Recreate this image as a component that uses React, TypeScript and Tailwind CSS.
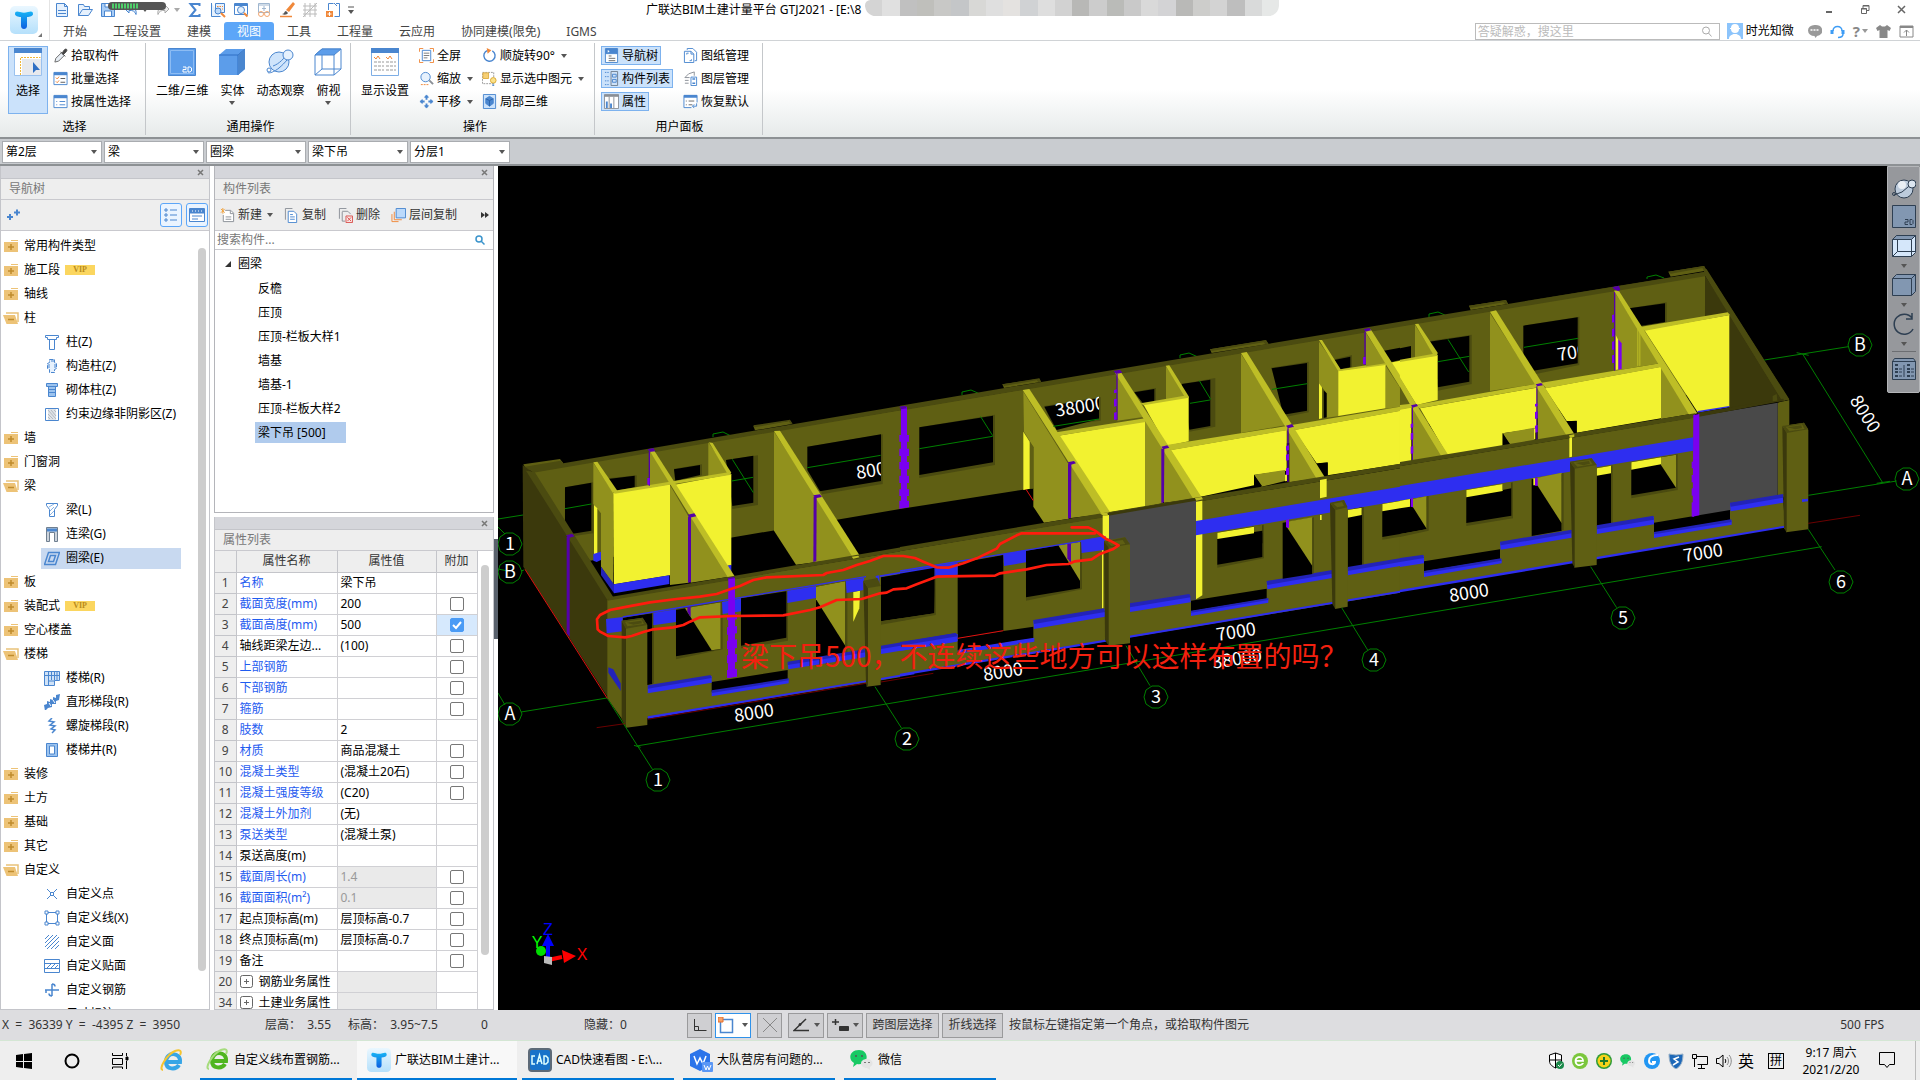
import React from "react";

const FONT = "font-['Noto_Sans','Noto_Sans_CJK_SC',sans-serif]";

type IconProps = { name: string; className?: string; size?: number };

const B = "#4a86cf";
const G = "#8a8f96";

const shapes: Record<string, React.ReactNode> = {
  file: <g stroke={B} fill="none"><path d="M2.5 1.5h8l3 3v10h-11z" fill="#e6f1fd" /><path d="M10.500 1.500v3h3M4 8.500h8M4 11.500h8" /></g>,
  open: <path d="M1.500 13.500v-11h5l1 2h5v3M1.500 13.500l4-6h10l-4 6z" fill="#e6f1fd" stroke={B} />,
  save: <g stroke={B}><path d="M1.500 1.500h13v13h-13z" fill="#a9cdf6" /><path d="M4.500 14v-5h7v5M5 2v3h6v-3" fill="#fff" /></g>,
  undo: <path d="M6 3l-4 4 4 4v-2.500c4-.5 6 1 7 4 1-5-2-7.500-7-7z" fill="#e6f1fd" stroke={B} />,
  redo: <path d="M10 3l4 4-4 4v-2.500c-4-.5-6 1-7 4-1-5 2-7.500 7-7z" fill="#eee" stroke="#aaa" />,
  sum: <path d="M12.500 4v-2h-9l5 6-5 6h9v-2" fill="none" stroke={B} strokeWidth="2" />,
  calc: <g fill="none" stroke={B}><path d="M1.500 1v13.500h9M5.500 1.500h9v9h-9z" fill="#e6f1fd" /><path d="M7 4.500h6M7 7h6" stroke="#f0883a" strokeDasharray="1.500 1" /><circle cx="8" cy="9" r="3" fill="#bcdafb" /><path d="M11 11l4 4" stroke="#f0883a" strokeWidth="2" /></g>,
  find: <g fill="none" stroke={B}><path d="M1.500 1.500h13v11h-13z" /><path d="M2 3h12" strokeWidth="2" /><circle cx="8" cy="8" r="3.500" fill="#e6f1fd" /><path d="M11 11l3.500 3.500" stroke="#f0883a" strokeWidth="2" /></g>,
  glasses: <g fill="none" stroke="#9fb6cf"><path d="M2.500 1.500h11v9h-11zM3 3h10" /><path d="M8 4v5M6 6.500h4" /><g stroke="#f3a771"><circle cx="5" cy="12" r="2.500" /><circle cx="11" cy="12" r="2.500" /></g></g>,
  brush: <g><path d="M14 0l2 2-6 8-3-2z" fill="#f0883a" /><path d="M3 12c3 0 2-3 4-3l2 2c-1 2-4 2-6 1z" fill="#555" /><path d="M1 14.500h12" stroke="#f0883a" strokeWidth="1.500" /></g>,
  mesh: <path d="M3 1v14M8 1v14M13 1v14M1 4h14M1 8h14M1 12h14M1 15l14-14" stroke="#bbb" fill="none" />,
  addfile: <g stroke={B} fill="none"><path d="M3.500 8v-6.500h5M11 1.500h3.500v13h-5" /><path d="M9 1l3 3" /><path d="M1 9h7v6h-7z" fill="#f0883a" stroke="none" /><path d="M4.500 10v4M2.500 12h4" stroke="#fff" /></g>,
  picker: <g><path d="M2 15l1-4 6-6 3 3-6 6z" fill="#e8eef5" stroke="#666" /><path d="M8 4l5 5M10 5l2-3c2-2 4 0 2 2l-3 3z" fill="#444" stroke="#444" /></g>,
  batch: <g stroke={B} fill="none"><path d="M1 1.500h14v13h-14z" fill="#fff" /><path d="M1 3h14" strokeWidth="3" /><path d="M3 7l1.500 1.500 2-2.500M3 11l1.500 1.500 2-2.500" stroke="#f0883a" /><path d="M8 8h5M8 12h5" stroke="#555" /></g>,
  byattr: <g stroke={B} fill="none"><path d="M1 1.500h14v13h-14z" fill="#fff" /><path d="M1 3h14" strokeWidth="3" /><path d="M3.500 8h1M3.500 11.500h1M7 8h6M7 11.500h6" stroke={B} /></g>,
  full: <g fill="none"><path d="M.500 4v-3.500h4M11.500.500h4v3.500M15.500 12v3.500h-4M4.500 15.500h-4v-3.500" stroke="#f0883a" /><path d="M3.500 2.500h9v11h-9z" stroke={B} /><path d="M5 5.500h6M5 8h6M5 10.500h4" stroke="#777" /></g>,
  zoom: <g fill="none" stroke={B}><circle cx="7" cy="6.500" r="5" fill="#e6f1fd" /><path d="M11 10l4 4" stroke={G} strokeWidth="2" /><path d="M2 14.500h9" stroke="#f0883a" strokeDasharray="2 1" /></g>,
  pan: <g stroke={B} fill={B}><path d="M8 1l2 2.500h-4zM8 15l2-2.500h-4zM1 8l2.500-2v4zM15 8l-2.500-2v4z" /><path d="M8 3v3M8 10v3M3 8h3M10 8h3" strokeWidth="2" /></g>,
  rotate: <g fill="none"><path d="M6 2.500a6 6 0 1 0 5 .5" stroke={B} strokeWidth="1.500" /><path d="M5 0l5 2.500-4 3.500z" fill="#f0883a" /></g>,
  showsel: <g fill="none"><path d="M.500 1.500h12v12h-12z" stroke="#999" strokeDasharray="2 1" /><path d="M1 2h6v6h-6z" fill="#f6cf74" stroke="#dfae43" /><circle cx="12" cy="10" r="3" fill="#fbe28a" stroke="#d9a832" /><path d="M11 14h2M11 15.500h2" stroke={B} /></g>,
  local3d: <g stroke={B}><path d="M1.500.500h13v15h-13z" fill="#cbe2fb" /><path d="M8 2.500l4 2.500v5l-4 3-4-3v-5z" fill={B} /><path d="M4 5l4 2 4-2M8 7v6" stroke="#2a62a8" fill="none" /></g>,
  navtree: <g stroke={B} fill="none"><path d="M1.500.500h13v15h-13z" fill="#fff" /><path d="M2 1h12v5h-12z" fill={B} /><path d="M4 2l2 1.500-2 1.500z" fill="#fff" stroke="none" /><path d="M5 8.500h3M5 11h7M5 13.500h7" stroke="#666" /></g>,
  complist: <g stroke={B} fill="none"><path d="M1 1.500h4M1 6h4M1 10.500h4M1 14.500h4" strokeDasharray="1.500 1" /><path d="M7.500.500h7v15h-7z" fill="#cfe2f7" stroke="#6f7f90" /><path d="M9 3.500h4v3h-4zM9 9h4v3h-4z" /></g>,
  attr: <g fill="none" stroke={G}><path d="M.500.500h15v15h-15z" fill="#fff" /><path d="M0 2h16" strokeWidth="2" /><path d="M5.500 3v12M10.500 3v12" /><path d="M3 8v7M7.500 10v5" stroke={B} strokeWidth="2" /></g>,
  drawing: <g stroke={B} fill="none"><path d="M4.500 2v-1.500h6l4 4v9h-2" /><path d="M1.500 3.500h7l3 3v9h-10z" fill="#fff" /><path d="M8.500 3.500v3h3M4 7v-1.500h2M9 12v1.500h-2" /></g>,
  layers: <g fill="none"><path d="M12 1l-6 2-4 4h5M2 10h4M2 13h4M12 1v4" stroke={G} /><path d="M8.500 6.500h6v9h-6z" fill="#fff" stroke={B} /><path d="M10 8.500h3M10 13h3" stroke={B} strokeWidth="1.500" /></g>,
  restore: <g stroke={B} fill="none"><path d="M15 9v-7.500h-14v13h8" fill="#fff" /><path d="M1 2.500h14" strokeWidth="3" /><path d="M3 7.500h1M3 11.500h1M6 7.500h6M6 11.500h4" stroke="#666" /><path d="M14.500 10v3h-4M12 11l-2 2 2 2" /></g>,
  newc: <g fill="none" stroke={G}><path d="M5.500 2.500h6l3 3v9h-11v-7" fill="#fff" /><path d="M11 3v3h3M6 9.500h6M6 12h6" /><path d="M1 1l4 4M5 1l-4 4M3 0v6" stroke="#f0a03a" /></g>,
  copy: <g fill="none" stroke={B}><path d="M9 .500h-7.500v12" stroke={G} /><path d="M4.500 3.500h6l3 3v9h-9z" fill="#fff" /><path d="M6.500 7h3M6.500 9.500h5M6.500 12h5" /></g>,
  del: <g fill="none" stroke={G}><path d="M9 .500h-7.500v11M4.500 3.500h6l3 3M4.500 4v10h3" /><path d="M8.500 8.500h7v7h-7z" stroke="#d9534f" fill="#fbe3e2" /><path d="M10 10l4 4M14 10l-4 4" stroke="#d9534f" /></g>,
  between: <g fill="none"><path d="M5.500.500h10v10h-10z" fill="#bcdafb" stroke={B} /><path d="M3.500 4v8.500h8M1 6.500v8h7" stroke="#f0883a" /></g>,
  column: <path d="M1.500 1.500h13v2h-2v2h-9v-2h-2zM5.500 5.500v10h5v-10" fill="#fff" stroke={B} />,
  gzz: <g fill="none" stroke={B}><path d="M5.500 1.500h5v3l2 1v5l-2 1v3h-5v-3l-2-1v-5l2-1z" fill="#e6f1fd" strokeDasharray="4 1" /><path d="M5 6v4M11 6v4M7 3h3" /></g>,
  brick: <g fill="none" stroke={B}><path d="M2.500 1.500h11v3h-11zM4.500 4.500h7v10h-7z" fill="#9cc3ee" /><path d="M5 7.500h6M5 10.500h6" /></g>,
  hatchbox: <g fill="none"><path d="M1.500 2.500h13v12h-13z" fill="#fff" stroke={B} /><path d="M4 3h8v11h-8z" fill="#dfe3e8" /><path d="M4 4l8 9M7 4l5 6M4 8l5 5M10 4l2 2M4 11l2 2" stroke="#b4bac1" /></g>,
  beam: <g fill="none" stroke={B}><path d="M2.500 1.500h11v2l-3 4v7h-5v-7l-3-4z" fill="#fff" /><path d="M5 5l5-3M6 9l4-4M6 13l4-4" stroke="#8ab4e4" /></g>,
  lianliang: <g fill="none"><path d="M2.500 15.500v-14h11v14h-3v-9h-5v9z" fill="#ccd3db" stroke="#6f7f90" /><path d="M3 2.500h10v3h-10z" fill={B} /></g>,
  ring: <path d="M4.500 2.500h11l-4 12h-11zM6.500 5.500h5l-2 6h-5z" fill="none" stroke={B} strokeWidth="1.500" />,
  stair: <g fill="none" stroke={B}><path d="M.500 1.500h15v9h-5v5h-10z" fill="#cfe2f7" /><path d="M4.500 2v13M7.500 2v8M10.500 2v8M13 2v8M1 5.500h14M4.500 11h6" /></g>,
  straight: <g fill={B}><path d="M0 11l3-1v-3l3 1v-3l3 1v-3l3 1v-3l4-1-1 6-3 1v3l-4 0v3l-4 1-3 3z" /><path d="M5 9l2 3M9 6l2 3" stroke="#fff" /></g>,
  spiral: <path d="M8 0l-3 3 5 1-4 3 5 1-4 3 4 1-3 3" fill="none" stroke={B} strokeWidth="1.500" />,
  well: <g fill="#9cc3ee" stroke={B}><path d="M2.500 1.500h11v13h-11z" /><path d="M5.500 4h5v8h-5z" fill="#fff" /></g>,
  point: <g fill="none" stroke={B}><path d="M3 3l10 10M13 3l-10 10" /><path d="M6.500 6.500h3v3h-3z" fill="#fff" /></g>,
  line: <g fill="#fff" stroke={B}><path d="M2.500 2.500h11v11h-11z" /><path d="M1 1h3v3h-3zM12 1h3v3h-3zM1 12h3v3h-3zM12 12h3v3h-3z" /></g>,
  face: <path d="M1 5l4-4M1 9l8-8M1 13l12-12M3 15l12-12M7 15l8-8M11 15l4-4" stroke={B} />,
  veneer: <g fill="none" stroke={B}><path d="M.500 1.500h15v13h-15zM1 5.500h14M1 10.500h14" /><path d="M3 10l4-4M7 10l4-4M11 10l3-3" /></g>,
  rebar: <path d="M1 8h14M8 2v12M8 2c2 0 3 1 3 2.500M8 14c-2 0-3-1-3-2.500M2 8v3" fill="none" stroke={B} strokeWidth="1.500" />,
  node: <path d="M2 3v10M14 3v10M2 8h12" fill="none" stroke={G} />,
};

const Icon = ({ name, className = "", size = 16 }: IconProps) => (
  <svg viewBox="0 0 16 16" width={size} height={size} className={`shrink-0 ${className}`} aria-hidden="true">
    {shapes[name]}
  </svg>
);

const Caret = ({ className = "" }: { className?: string }) => (
  <svg viewBox="0 0 6 4" width="6" height="4" className={`shrink-0 ${className}`} aria-hidden="true">
    <path d="M0 0h6l-3 4z" fill="#555" />
  </svg>
);

const Logo = ({ size }: { size: number }) => (
  <svg viewBox="0 0 28 28" width={size} height={size} aria-hidden="true">
    <defs>
      <linearGradient id="tile" x1="0" y1="0" x2="0" y2="1">
        <stop offset="0" stopColor="#eaf7ff" />
        <stop offset="1" stopColor="#b5e0fb" />
      </linearGradient>
      <linearGradient id="tee" x1="0" y1="0" x2="0" y2="1">
        <stop offset="0" stopColor="#18b4f5" />
        <stop offset="1" stopColor="#0d5fe0" />
      </linearGradient>
    </defs>
    <rect width="28" height="28" rx="5" fill="url(#tile)" />
    <path d="M5 8c0-3 2-3 5-2 3 1 5 1 8 0 3-1 5-1 5 2 0 2-3 3-6 3v9c0 4-6 4-6 0v-9c-3 0-6-1-6-3z" fill="url(#tee)" />
  </svg>
);

/* ---------- header ---------- */

const tabs = ["开始", "工程设置", "建模", "视图", "工具", "工程量", "云应用", "协同建模(限免)", "IGMS"];

const greys = [
  "bg-[#d4d4d4]", "bg-[#e0e0e0]", "bg-[#c0c0c0]", "bg-[#bfbfbb]", "bg-[#c8c8c6]", "bg-[#c4c6c8]", "bg-[#d8d8d6]", "bg-[#dfdfdf]",
  "bg-[#e4e2e0]", "bg-[#d0d2d4]", "bg-[#dedede]", "bg-[#d2d2d2]", "bg-[#b8b8b6]", "bg-[#cccccc]", "bg-[#babbb8]", "bg-[#c9c9c9]",
  "bg-[#d9d9d9]", "bg-[#d3d3d5]", "bg-[#b9b9b7]", "bg-[#cdcdcb]", "bg-[#d3d3d3]", "bg-[#bebebe]", "bg-[#d9dada]", "bg-[#e6e8e7]",
];

const Header = () => (
  <header className="flex h-[41px] shrink-0 border-b border-[#d0d3d6] bg-white">
    <button aria-label="菜单" className="flex w-[50px] shrink-0 items-center border-r border-[#e4e4e4] pl-[10px]">
      <Logo size={28} />
      <svg viewBox="0 0 4 4" width="4" height="4" className="mt-[30px]" aria-hidden="true"><path d="M4 0v4h-4z" fill="#777" /></svg>
    </button>
    <div className="flex min-w-0 flex-1 flex-col">
      <div className="flex h-[22px] items-start">
        <div className="relative flex h-5 w-[596px] shrink-0 items-center gap-[7px] pl-1">
          <Icon name="file" />
          <Icon name="open" />
          <Icon name="save" />
          <span className="flex w-[25px] items-center gap-[3px]"><Icon name="undo" /><Caret /></span>
          <span className="flex w-[25px] items-center gap-[3px]"><Icon name="redo" /><Caret className="opacity-50" /></span>
          {["sum", "calc", "find", "glasses", "brush", "mesh", "addfile"].map((n) => <Icon key={n} name={n} />)}
          <svg viewBox="0 0 6 8" width="6" height="8" aria-hidden="true"><path d="M0 1h6" stroke="#555" /><path d="M0 4h6l-3 4z" fill="#555" /></svg>
          <svg viewBox="0 0 58 8" width="58" height="8" className="absolute left-[58px] top-[2px]" aria-hidden="true">
            <rect width="58" height="8" rx="4" fill="#555" />
            <path d="M4 4h27" stroke="#4fd06a" strokeWidth="5" strokeDasharray="2 1" />
          </svg>
        </div>
        <h1 className="w-[219px] shrink-0 overflow-hidden whitespace-nowrap text-[12px] leading-[20px] text-black">广联达BIM土建计量平台 GTJ2021 - [E:\8</h1>
        <div className="flex h-4 w-[414px] shrink-0 overflow-hidden rounded-b-2xl rounded-tl-lg">
          {greys.map((g, i) => <span key={i} className={`flex-1 ${g}`} />)}
        </div>
        <div className="ml-auto flex h-5 items-center gap-[22px] pr-3 text-[#666]">
          <button aria-label="最小化"><svg width="14" height="14" viewBox="0 0 14 14"><path d="M4 9h6" stroke="currentColor" strokeWidth="2" /></svg></button>
          <button aria-label="还原"><svg width="14" height="14" viewBox="0 0 14 14" fill="none" stroke="currentColor"><path d="M5 5v-2.500h6v5h-2.500" /><path d="M3.500 5.500h5v5h-5zM3 6h6M5 3h6" /></svg></button>
          <button aria-label="关闭"><svg width="14" height="14" viewBox="0 0 14 14" fill="none" stroke="currentColor" strokeWidth="1.500"><path d="M4 3l7 7M11 3l-7 7" /></svg></button>
        </div>
      </div>
      <div className="flex h-[18px] items-center">
        <nav className="flex h-full">
          {tabs.map((t) => (
            <button key={t} className={`px-[13px] pt-[2px] text-[12px] leading-4 ${t === "视图" ? "rounded-t-[3px] bg-[#5ca6f8] text-white" : "text-[#444]"}`}>{t}</button>
          ))}
        </nav>
        <div className="ml-auto flex items-center pr-[6px]">
          <label className="mr-[7px] flex h-[17px] w-[245px] items-center border border-[#bbb] bg-white pr-[7px]">
            <input aria-label="搜索" placeholder="答疑解惑，搜这里" className="min-w-0 flex-1 pl-[2px] text-[12px] leading-[15px] outline-none placeholder:text-[#bbb]" />
            <svg width="11" height="11" viewBox="0 0 11 11" fill="none" stroke="#aaa"><circle cx="5" cy="4.500" r="3.500" /><path d="M7.500 7l3 3.500" /></svg>
          </label>
          <svg width="16" height="16" viewBox="0 0 16 16"><path d="M0 0h16v16h-16z" fill="#8cc4fb" /><path d="M4 5a4 4 0 0 1 8 0h1v1h-1a4 4 0 0 1-8 0h-1v-1zM2 16c0-4 3-4 4.500-5h3c1.500 1 4.500 1 4.500 5z" fill="#fff" /></svg>
          <span className="ml-[3px] text-[12px] leading-4 text-black">时光知微</span>
          <div className="ml-[13px] flex items-center gap-2">
            <svg width="15" height="15" viewBox="0 0 15 15"><path d="M7.500 1a6.500 5.500 0 1 0 0 11l1 2 1.500-2a6.500 5.500 0 0 0-2.500-11z" fill="#999" /><path d="M3.500 6h2M6.500 6h2M9.500 6h2" stroke="#fff" strokeWidth="1.500" /></svg>
            <svg width="15" height="15" viewBox="0 0 15 15" fill="none" stroke="#3d9cf5"><path d="M3 7c0-6 9-6 9 0" strokeWidth="1.500" /><path d="M2 6v4M13 6v4" strokeWidth="3" /><path d="M13 10c0 2-2 3.500-5 3.500" strokeWidth="1.500" /></svg>
            <span className="flex items-center gap-[2px] text-[15px] font-bold leading-4 text-[#888]">?<Caret className="opacity-60" /></span>
            <svg width="15" height="15" viewBox="0 0 15 15"><path d="M4 1l2 1.500h3l2-1.500 4 3-1.500 3-2-1v8h-8v-8l-2 1-1.500-3z" fill="#888" /></svg>
            <svg width="15" height="15" viewBox="0 0 15 15" fill="none" stroke="#888"><path d="M1 2h13v11h-13z" /><path d="M1 3h13" strokeWidth="2" /><path d="M7.500 12v-6M5 8.500l2.500-2.500 2.500 2.500" /></svg>
          </div>
        </div>
      </div>
    </div>
  </header>
);

/* ---------- ribbon ---------- */

const Small = ({ icon, text, active, caret }: { icon: string; text: string; active?: boolean; caret?: boolean }) => (
  <button className={`flex h-[19px] items-center gap-[3px] self-start whitespace-nowrap border px-[2px] text-[12px] leading-[17px] text-black ${active ? "border-[#7db2ee] bg-[#cbe2fb]" : "border-transparent"}`}>
    <Icon name={icon} size={15} />
    {text}
    {caret && <Caret className="ml-[3px]" />}
  </button>
);

const Col = ({ children, className = "" }: { children: React.ReactNode; className?: string }) => (
  <div className={`flex flex-col gap-1 ${className}`}>{children}</div>
);

const Big = ({ text, caret, children }: { text: string; caret?: boolean; children: React.ReactNode }) => (
  <button className="flex flex-col items-center px-[5px] pt-[2px] text-[12px] leading-4 text-black">
    <svg viewBox="0 0 28 28" width="28" height="28" className="mb-[7px]" aria-hidden="true">{children}</svg>
    <span className="whitespace-nowrap">{text}</span>
    {caret && <Caret className="mt-[2px]" />}
  </button>
);

const Group = ({ title, className, children }: { title: string; className: string; children: React.ReactNode }) => (
  <section className={`my-[2px] flex shrink-0 flex-col border-r border-[#c4c7ca] pt-[3px] ${className}`}>
    <div className="flex h-[72px] items-start">{children}</div>
    <h2 className="mt-[3px] text-center text-[12px] leading-4 text-black">{title}</h2>
  </section>
);

const Ribbon = () => (
  <div className="flex h-[98px] shrink-0 border-b-2 border-[#8d9194] bg-linear-to-b from-white from-50% to-[#e6eaea]">
    <Group title="选择" className="w-[146px] pl-2 pr-1">
      <button className="flex h-[68px] w-10 shrink-0 flex-col items-center border border-[#7db2ee] bg-[#cbe2fb] pt-[1px] text-[12px] leading-4 text-black">
        <svg viewBox="0 0 28 28" width="28" height="28" className="mb-[7px]" aria-hidden="true">
          <path d="M.500.500h27v27h-27z" fill="#fff" stroke="#9ac1ee" />
          <path d="M0 0h28v5h-28z" fill={B} />
          <path d="M6.500 27v-17.500h20" fill="none" stroke="#f0b73a" strokeDasharray="2 1" />
          <path d="M8 11h19v16h-19z" fill="#e7e9ee" />
          <path d="M19 14v11l3-3h4z" fill="#2f6fc4" />
        </svg>
        选择
      </button>
      <Col className="ml-[2px]">
        <Small icon="picker" text="拾取构件" />
        <Small icon="batch" text="批量选择" />
        <Small icon="byattr" text="按属性选择" />
      </Col>
    </Group>
    <Group title="通用操作" className="w-[205px] pl-[5px]">
      <Big text="二维/三维">
        <path d="M.500.500h27v27h-27z" fill="#5c9dea" stroke={B} /><path d="M2.500 2.500h23v23h-23z" fill="none" stroke="#8dbcf3" />
        <path d="M15 19h3v2.500h-3v2.500h4M20 19v5h2l1.500-1v-3l-1.500-1z" fill="none" stroke="#fff" />
      </Big>
      <Big text="实体" caret>
        <path d="M1 7l7-6h19v20l-7 6h-19z" fill="#5c9dea" /><path d="M1 7h19l7-6M20 7v20" stroke="#2f6fc4" fill="none" /><path d="M20 7l7-6v20l-7 6z" fill={B} />
      </Big>
      <Big text="动态观察">
        <circle cx="13" cy="14" r="10" fill="#cfe4fb" stroke={B} /><path d="M7 18c6-2 12-8 14-13M3 22c-4 5 4 3 10-2s12-12 11-15" fill="none" stroke={B} /><circle cx="22" cy="7" r="5" fill="#e6f1fd" stroke={B} /><circle cx="3" cy="22" r="2" fill="#fff" stroke={B} />
      </Big>
      <Big text="俯视" caret>
        <path d="M1 7l7-6h19v20l-7 6h-19z" fill="#fff" stroke={B} /><path d="M1 7l7-6h19l-7 6z" fill="#5c9dea" stroke={B} /><path d="M20 7v20M8 7v14h19M8 21l-7 6" stroke={B} fill="none" />
      </Big>
    </Group>
    <Group title="操作" className="w-[244px] pl-[5px]">
      <Big text="显示设置">
        <path d="M.500.500h27v27h-27z" fill="#fff" stroke="#7eaee5" /><path d="M0 0h28v5h-28z" fill={B} />
        <path d="M3 9l2 2 2-3 2 3M15 9l2 2 2-3 2 3" fill="none" stroke="#f0883a" />
        <path d="M3 14h10M15 14h10M3 18h10M15 18h10M3 22h10M15 22h10" stroke="#999" strokeDasharray="3 1" />
      </Big>
      <Col className="ml-[2px] w-[63px]">
        <Small icon="full" text="全屏" />
        <Small icon="zoom" text="缩放" caret />
        <Small icon="pan" text="平移" caret />
      </Col>
      <Col>
        <Small icon="rotate" text="顺旋转90°" caret />
        <Small icon="showsel" text="显示选中图元" caret />
        <Small icon="local3d" text="局部三维" />
      </Col>
    </Group>
    <Group title="用户面板" className="w-[168px] pl-[6px] pr-1">
      <Col className="w-[79px]">
        <Small icon="navtree" text="导航树" active />
        <Small icon="complist" text="构件列表" active />
        <Small icon="attr" text="属性" active />
      </Col>
      <Col>
        <Small icon="drawing" text="图纸管理" />
        <Small icon="layers" text="图层管理" />
        <Small icon="restore" text="恢复默认" />
      </Col>
    </Group>
  </div>
);

const SelectBar = () => (
  <div className="flex h-[27px] shrink-0 items-center gap-[2px] border-b-2 border-[#8d9194] bg-[#c9ccd0] pl-[2px]">
    {["第2层", "梁", "圈梁", "梁下吊", "分层1"].map((s) => (
      <label key={s} className="relative flex w-[100px] items-center">
        <select aria-label={s} className="h-[22px] w-full appearance-none border border-[#a9acb0] bg-white pl-[3px] text-[12px] leading-5 text-black">
          <option>{s}</option>
        </select>
        <Caret className="pointer-events-none absolute right-[5px]" />
      </label>
    ))}
  </div>
);

/* ---------- side panels ---------- */

const PanelHead = ({ title }: { title: string }) => (
  <>
    <div className="flex h-[13px] shrink-0 items-center justify-end border-b border-[#c4c5ca] bg-[#d5d6db] pr-[5px]">
      <button aria-label={`关闭${title}`}>
        <svg width="7" height="7" viewBox="0 0 7 7"><path d="M1 1l5 5M6 1l-5 5" stroke="#777" strokeWidth="1.500" /></svg>
      </button>
    </div>
    <h2 className="h-[21px] shrink-0 border-b border-[#c9c9ce] bg-[#eee] pl-2 text-[12px] leading-5 text-[#777]">{title}</h2>
  </>
);

type Node = { t: string; open?: boolean; vip?: boolean; kids?: [string, string][] };

const tree: Node[] = [
  { t: "常用构件类型" },
  { t: "施工段", vip: true },
  { t: "轴线" },
  { t: "柱", open: true, kids: [["column", "柱(Z)"], ["gzz", "构造柱(Z)"], ["brick", "砌体柱(Z)"], ["hatchbox", "约束边缘非阴影区(Z)"]] },
  { t: "墙" },
  { t: "门窗洞" },
  { t: "梁", open: true, kids: [["beam", "梁(L)"], ["lianliang", "连梁(G)"], ["ring", "圈梁(E)"]] },
  { t: "板" },
  { t: "装配式", vip: true },
  { t: "空心楼盖" },
  { t: "楼梯", open: true, kids: [["stair", "楼梯(R)"], ["straight", "直形梯段(R)"], ["spiral", "螺旋梯段(R)"], ["well", "楼梯井(R)"]] },
  { t: "装修" },
  { t: "土方" },
  { t: "基础" },
  { t: "其它" },
  { t: "自定义", open: true, kids: [["point", "自定义点"], ["line", "自定义线(X)"], ["face", "自定义面"], ["veneer", "自定义贴面"], ["rebar", "自定义钢筋"], ["node", "尺寸标注"]] },
];

const Folder = ({ open }: { open?: boolean }) => (
  <svg width="16" height="14" viewBox="0 0 16 14" className="shrink-0" aria-hidden="true">
    {open ? (
      <><path d="M3 2h12v9" fill="none" stroke="#e9c27a" strokeWidth="1.500" /><path d="M0 4h12l3 9h-11.500z" fill="#edc377" /><path d="M5 8.500h6" stroke="#c08c2d" strokeWidth="1.500" /></>
    ) : (
      <><path d="M1 3h7v-2h7v12h-14z" fill="#edc377" /><path d="M8 2.500h7" stroke="#fff" /><path d="M5 8h6M8 5v6" stroke="#c08c2d" strokeWidth="1.500" /></>
    )}
  </svg>
);

const NavPanel = () => (
  <aside className="flex w-[210px] shrink-0 flex-col overflow-hidden border-x border-b border-[#c4c5ca] bg-white">
    <PanelHead title="导航树" />
    <div className="flex h-[31px] shrink-0 items-center border-b border-[#c9c9ce] bg-[#eee] pl-[6px] pr-[1px]">
      <svg width="14" height="12" viewBox="0 0 14 12"><path d="M0 8h6M3 5v6M7 3.500h6M10 .500v6" stroke={B} strokeWidth="2" /></svg>
      <button aria-label="列表" className="ml-auto flex h-6 w-[22px] items-center justify-center rounded-[3px] border border-[#5ca6f8] bg-[#eaf4ff]">
        <svg width="14" height="14" viewBox="0 0 14 14" fill="none" stroke={B}><path d="M1 1h2v2h-2zM1 6h2v2h-2zM1 11h2v2h-2zM6 2h7M6 7h7M6 12h7" /></svg>
      </button>
      <button aria-label="窗口" className="ml-1 flex h-6 w-[22px] items-center justify-center rounded-[3px] border border-[#5ca6f8] bg-[#eaf4ff]">
        <svg width="16" height="14" viewBox="0 0 16 14" fill="none" stroke={B}><path d="M.500.500h15v13h-15z" fill="#fff" /><path d="M1 1h14v4h-14z" fill={B} /><path d="M3 3h1M6 3h1M9 3h1M12 3h1" stroke="#fff" /><path d="M3 8h10M3 11h6" /></svg>
      </button>
    </div>
    <div className="flex min-h-0 flex-1 overflow-hidden pt-[3px]">
      <ul className="flex-1 text-[12px] leading-6 text-black">
        {tree.map((n) => (
          <li key={n.t}>
            <button className="flex h-6 w-full items-center gap-[5px] pl-[2px]">
              <Folder open={n.open} />
              {n.t}
              {n.vip && <span className="flex h-[10px] w-[30px] items-center justify-center bg-[#fbd65f] font-['Liberation_Serif',serif] text-[8px] font-bold leading-none text-[#b98a1b]">VIP</span>}
            </button>
            {n.kids && (
              <ul>
                {n.kids.map(([icon, t]) => (
                  <li key={t} className="flex h-6 items-center pl-10">
                    <button className={`flex h-[21px] w-[140px] items-center gap-[6px] whitespace-nowrap pl-[3px] ${t === "圈梁(E)" ? "bg-[#c8d9f0]" : ""}`}>
                      <Icon name={icon} />
                      {t}
                    </button>
                  </li>
                ))}
              </ul>
            )}
          </li>
        ))}
      </ul>
      <div className="mr-[3px] mt-[14px] mb-[38px] w-2 rounded-full bg-[#cdcdcd]" />
    </div>
  </aside>
);

const components = ["反檐", "压顶", "压顶-栏板大样1", "墙基", "墙基-1", "压顶-栏板大样2", "梁下吊 [500]"];

const ComponentPanel = () => (
  <section className="flex h-[347px] shrink-0 flex-col border-x border-b border-[#b4b5ba] bg-white">
    <PanelHead title="构件列表" />
    <div className="flex h-[31px] shrink-0 items-center border-b border-[#c9c9ce] bg-[#eee] pl-[5px] pr-1 text-[12px] text-[#333]">
      <button className="flex items-center gap-[3px]"><Icon name="newc" size={15} />新建<Caret className="ml-[2px]" /></button>
      <button className="ml-[11px] flex items-center gap-[3px]"><Icon name="copy" size={15} />复制</button>
      <button className="ml-3 flex items-center gap-[3px]"><Icon name="del" size={15} />删除</button>
      <button className="ml-[11px] flex items-center gap-[3px]"><Icon name="between" size={15} />层间复制</button>
      <button aria-label="更多" className="ml-auto"><svg width="8" height="6" viewBox="0 0 8 6"><path d="M0 0l4 3-4 3zM4 0l4 3-4 3z" fill="#333" /></svg></button>
    </div>
    <label className="flex h-[19px] shrink-0 items-center border-b border-[#c9c9ce] pr-2">
      <input aria-label="搜索构件" placeholder="搜索构件..." className="min-w-0 flex-1 pl-[2px] text-[12px] leading-4 outline-none placeholder:text-[#777]" />
      <svg width="10" height="10" viewBox="0 0 10 10" fill="none" stroke="#3b94cc" strokeWidth="1.500"><circle cx="4" cy="4" r="3" /><path d="M6 6l3.500 3.500" /></svg>
    </label>
    <div className="pt-[2px] text-[12px] leading-6 text-black">
      <button className="flex h-6 items-center gap-[7px] pl-[10px]">
        <svg width="6" height="6" viewBox="0 0 6 6"><path d="M6 0v6h-6z" fill="#333" /></svg>
        圈梁
      </button>
      <ul className="pl-10">
        {components.map((c) => (
          <li key={c} className="flex h-6 items-center">
            <button className={`h-[21px] w-[91px] whitespace-nowrap pl-[3px] text-left leading-[21px] ${c.startsWith("梁下吊") ? "bg-[#b0cbed]" : ""}`}>{c}</button>
          </li>
        ))}
      </ul>
    </div>
  </section>
);

type Prop = { n: number; k: string; v?: string; blue?: boolean; box?: boolean; on?: boolean; grey?: boolean; group?: boolean };

const props: Prop[] = [
  { n: 1, k: "名称", v: "梁下吊", blue: true },
  { n: 2, k: "截面宽度(mm)", v: "200", blue: true, box: true },
  { n: 3, k: "截面高度(mm)", v: "500", blue: true, box: true, on: true },
  { n: 4, k: "轴线距梁左边...", v: "(100)", box: true },
  { n: 5, k: "上部钢筋", blue: true, box: true },
  { n: 6, k: "下部钢筋", blue: true, box: true },
  { n: 7, k: "箍筋", blue: true, box: true },
  { n: 8, k: "肢数", v: "2", blue: true },
  { n: 9, k: "材质", v: "商品混凝土", blue: true, box: true },
  { n: 10, k: "混凝土类型", v: "(混凝土20石)", blue: true, box: true },
  { n: 11, k: "混凝土强度等级", v: "(C20)", blue: true, box: true },
  { n: 12, k: "混凝土外加剂", v: "(无)", blue: true },
  { n: 13, k: "泵送类型", v: "(混凝土泵)", blue: true },
  { n: 14, k: "泵送高度(m)" },
  { n: 15, k: "截面周长(m)", v: "1.4", blue: true, box: true, grey: true },
  { n: 16, k: "截面面积(m²)", v: "0.1", blue: true, box: true, grey: true },
  { n: 17, k: "起点顶标高(m)", v: "层顶标高-0.7", box: true },
  { n: 18, k: "终点顶标高(m)", v: "层顶标高-0.7", box: true },
  { n: 19, k: "备注", box: true },
  { n: 20, k: "钢筋业务属性", grey: true, group: true },
  { n: 34, k: "土建业务属性", grey: true, group: true },
];

const PropertyPanel = () => (
  <section className="mt-1 flex min-h-0 flex-1 flex-col overflow-hidden border-x border-b border-[#c4c5ca] bg-white">
    <PanelHead title="属性列表" />
    <div className="flex min-h-0 flex-1 overflow-hidden">
      <table className="w-[262px] table-fixed border-collapse self-start text-[12px] leading-5">
        <colgroup>
          <col className="w-[21px]" /><col className="w-[101px]" /><col className="w-[99px]" /><col className="w-[41px]" />
        </colgroup>
        <thead>
          <tr className="h-[21px] bg-[#eee] text-[#333]">
            {["", "属性名称", "属性值", "附加"].map((h) => <th key={h} className="border-b border-r border-[#c4c5ca] p-0 font-normal">{h}</th>)}
          </tr>
        </thead>
        <tbody>
          {props.map((p) => (
            <tr key={p.n} className="h-[21px]">
              <td className="border-b border-r border-[#c4c5ca] bg-[#eee] p-0 text-center text-[#444]">{p.n}</td>
              <td className={`whitespace-nowrap border-b border-r border-[#d0d0d4] py-0 pl-[3px] pr-0 ${p.blue ? "text-[#1f5cf0]" : "text-black"}`}>
                {p.group ? (
                  <span className="flex items-center gap-[6px]">
                    <button aria-label={`展开${p.k}`}><svg width="13" height="13" viewBox="0 0 13 13" className="block" fill="none" stroke="#666"><rect x=".5" y=".5" width="12" height="12" rx="2" /><path d="M4 6.500h5M6.500 4v5" /></svg></button>
                    {p.k}
                  </span>
                ) : p.k}
              </td>
              <td className={`whitespace-nowrap border-b border-r border-[#d0d0d4] py-0 pl-[3px] pr-0 ${p.grey ? "bg-[#eaeaea] text-[#999]" : "text-black"}`}>{p.v}</td>
              <td className={`border-b border-r border-[#d0d0d4] p-0 ${p.on ? "bg-[#d6e9fd]" : ""}`}>
                {p.box && (
                  <label className="relative mx-auto block h-[14px] w-[14px]">
                    <input type="checkbox" aria-label={p.k} defaultChecked={p.on} className="peer block h-[14px] w-[14px] appearance-none rounded-[2px] border border-[#777] bg-white checked:border-[#4a9bf5] checked:bg-[#4a9bf5]" />
                    <svg width="14" height="14" viewBox="0 0 14 14" className="pointer-events-none absolute left-0 top-0 hidden peer-checked:block" fill="none" stroke="#fff" strokeWidth="2"><path d="M3 7l3 3 5-6" /></svg>
                  </label>
                )}
              </td>
            </tr>
          ))}
        </tbody>
      </table>
      <div className="mx-auto mb-[54px] mt-[14px] w-2 rounded-full bg-[#cdcdcd]" />
    </div>
  </section>
);

/* ---------- 3d view ---------- */

const OL = "#5f5f13";
const OT = "#4b4b10";
const OD = "#3b390c";
const MY = "#91911d";
const TY = "#bebe26";
const YY = "#f2f230";
const BL = "#2e2ef0";
const BD = "#2323b8";
const PU = "#7a00f0";
const PD = "#5500a8";
const GR = "#494949";
const K = "#000";

type Shape = [string, string];

// Each wing is modelled on its own grid, three units to a pixel, and drawn back to front.
const west: Shape[] = [
  [OL, "95,665 1210,478 1210,775 700,862 270,932 95,700"],
  [OL, "70,643 180,627 190,640 80,662"],
  [OT, "74,650 182,632 190,640 1210,466 1210,480 100,668"],
  [OL, "760,528 870,512 876,522 765,541"],
  [OT, "760,526 870,509 878,521 872,521 866,514 764,532"],
  [OT, "195,712 280,697 280,850 195,862"], [K, "195,712 274,698 274,842 195,855"],
  [OT, "325,685 410,676 410,712 345,724"], [K, "325,687 404,677 404,712 345,722"],
  [OT, "522,656 606,643 606,676 525,692"], [K, "522,658 600,645 600,675 526,692"],
  [OT, "678,630 774,616 774,765 697,777"], [K, "678,630 760,617 760,758 697,768"],
  [OT, "922,590 1148,553 1148,702 966,733"], [K, "922,590 1143,553 1143,693 960,724 922,660"],
  [MY, "280,638 340,728 340,1003 303,950 303,790 280,762"],
  [YY, "282,765 292,775 292,912 282,912"],
  [BL, "280,912 303,905 303,930 290,936 280,932"],
  [TY, "280,637 292,635 352,722 338,728"],
  [MY, "625,577 690,672 625,682"],
  [TY, "627,577 638,579 694,668 684,674"],
  [MY, "450,605 518,700 450,707"],
  [YY, "340,728 510,703 510,976 342,1003"],
  [YY, "520,705 694,672 694,946 680,948"],
  [TY, "338,723 690,666 694,674 344,731"],
  [BD, "303,950 342,1003 342,1030 303,975"],
  [BL, "342,1003 508,976 508,1002 342,1030"],
  [BL, "680,948 694,944 694,968 690,965"],
  [MY, "510,706 566,800 566,998 510,1005"],
  [MY, "572,800 688,980 572,998"],
  [TY, "447,600 463,602 705,980 685,984"],
  [PD, "443,598 460,594 466,604 448,606"], [PD, "446,606 450,606 450,707 446,707"], [PU, "442,684 449,684 449,704 442,704"],
  [PD, "563,794 583,790 589,799 569,803"], [PD, "564,800 573,800 573,997 564,998"],
  [MY, "822,545 1068,920 888,944 822,842"],
  [TY, "822,543 840,542 1078,915 1058,922"],
  [PD, "940,736 960,733 966,741 946,745"], [PD, "941,740 950,740 949,934 940,936"],
  [OD, "68,645 100,668 325,1045 325,1345 70,950"],
  [OT, "78,662 104,666 342,1045 322,1050"],
  [PD, "198,856 216,851 224,859 206,864"], [PD, "200,860 209,860 209,1160 200,1150"],
  [OL, "322,1050 1210,902 1210,1280 440,1405 375,1420 322,1345"],
  [OT, "322,1050 335,1040 1210,891 1210,903 322,1052"],
  [TY, "1055,920 1075,917 1078,922 1060,926"],
  [K, "368,1103 457,1090 457,1302 442,1305 368,1305"],
  [OT, "457,1090 462,1090 462,1300 457,1301"],
  [OT, "528,1075 668,1053 668,1198 528,1228"], [K, "528,1080 662,1057 662,1197 528,1219"],
  [MY, "555,1075 662,1057 662,1197 635,1201"], [PD, "562,1072 572,1070 572,1102 562,1085"],
  [OT, "723,1045 864,1023 864,1172 723,1195"], [K, "723,1045 859,1024 859,1163 723,1187"],
  [K, "948,1010 1035,994 1035,1210 948,1223"],
  [MY, "948,1010 1035,994 1035,1186 948,1048"], [OT, "1035,994 1042,993 1042,1208 1035,1209"],
  [YY, "1060,1026 1080,1022 1078,1075 1060,1115"],
  [K, "635,1296 863,1260 863,1290 635,1325"],
  [BL, "318,1107 368,1101 368,1144 320,1150"], [BL, "368,1099 1098,978 1098,982 368,1103"],
  [BL, "460,1088 528,1078 528,1116 460,1126"], [BL, "666,1056 723,1045 723,1084 668,1092"],
  [BL, "862,1022 948,1008 948,1044 862,1059"], [BL, "1037,992 1092,984 1092,1020 1040,1029"],
  [BL, "443,1310 635,1278 635,1298 443,1330"], [BD, "443,1306 632,1275 635,1284 443,1316"],
  [BL, "635,1325 866,1288 866,1300 635,1339"], [BD, "635,1321 866,1285 866,1291 635,1329"],
  [BL, "863,1238 1098,1200 1098,1221 865,1258"], [BD, "863,1235 1098,1197 1098,1207 863,1245"],
  [BL, "443,1399 1100,1291 1100,1296 443,1406"],
  [BD, "325,1252 340,1258 362,1300 362,1323 325,1268"],
  [PD, "683,984 703,980 705,990 685,992"],
  [PU, "685,988 705,985 705,1280 684,1284"],
  [PU, "681,1095 711,1092 711,1108 681,1110"], [PU, "681,1132 711,1128 711,1150 681,1154"], [PU, "681,1172 711,1168 711,1194 681,1198"], [PU, "681,1216 711,1212 711,1236 681,1240"], [PU, "681,1260 711,1256 711,1280 681,1284"],
  [OL, "365,1112 428,1103 442,1125 442,1425 378,1433"],
  [OD, "365,1112 378,1135 378,1433 365,1408"],
  [OT, "365,1112 428,1103 442,1125 378,1136"], [OL, "375,1115 424,1108 432,1122 382,1129"], [OT, "380,1118 424,1112 426,1120 400,1124"],
];

const middle: Shape[] = [
  [OL, "0,480 1500,228 1500,520 390,716 0,777"],
  [OT, "0,467 1500,215 1500,230 0,482"],
  [OL, "307,403 418,386 422,396 312,414"], [OT, "307,403 418,385 424,396 415,396 410,391 312,408"],
  [OL, "930,298 1098,271 1105,282 935,309"], [OT, "930,298 1098,270 1106,282 1096,282 1090,277 935,303"],
  [OT, "58,532 285,494 285,645 58,684"], [K, "58,532 279,497 279,637 58,675"],
  [OT, "433,468 602,441 602,512 460,530"], [K, "433,470 597,445 597,507 470,540"],
  [OT, "703,425 768,414 768,457 730,462"], [K, "703,427 763,417 763,456 730,461"],
  [OT, "845,402 946,384 946,530 868,545"], [K, "845,402 931,389 931,528 868,539"],
  [OT, "1113,353 1226,335 1226,487 1160,500"], [K, "1115,355 1221,339 1221,482 1150,494"],
  [OT, "1303,328 1356,315 1356,352 1320,360"], [K, "1303,330 1351,320 1351,352 1320,358"],
  [K, "1448,303 1500,293 1500,330 1465,338"],
  [MY, "370,425 507,645 507,806 432,818 400,770 400,590 372,545"],
  [YY, "370,545 390,577 390,716 370,720"], [OL, "389,575 401,592 401,716 389,716"],
  [YY, "475,557 735,514 735,770 620,788"],
  [TY, "460,548 735,505 742,515 470,558"],
  [MY, "513,645 612,792 513,804"],
  [TY, "368,420 388,417 630,786 606,794"],
  [PD, "503,637 522,633 528,640 510,645"], [PD, "504,642 514,642 513,804 504,806"],
  [MY, "798,350 862,440 798,450"], [TY, "797,347 808,346 867,440 855,442"],
  [YY, "730,463 866,440 866,574 800,588"], [TY, "722,460 862,436 867,443 730,466"],
  [MY, "652,375 735,500 652,512"],
  [MY, "735,510 788,592 788,760 735,770"],
  [YY, "812,600 1160,540 1160,662 1062,675 1062,706 895,742"],
  [TY, "800,585 1160,528 1165,540 812,601"],
  [MY, "1062,674 1155,660 1155,693 1085,710"], [K, "1062,674 1086,708 1062,712"],
  [MY, "792,600 888,747 792,758"],
  [TY, "645,368 662,365 905,742 882,750"],
  [PD, "641,363 660,359 667,368 648,372"], [PD, "649,372 653,372 653,510 649,511"], [PU, "642,420 650,418 650,428 642,430"], [PU, "642,448 650,446 650,468 642,470"], [PU, "642,488 650,486 650,508 642,510"],
  [PD, "784,590 802,586 808,593 790,598"], [PD, "784,596 793,596 792,757 784,759"],
  [MY, "1257,275 1317,360 1317,498 1280,503 1280,430 1257,400"],
  [YY, "1257,400 1266,412 1266,505 1257,507"], [K, "1270,420 1280,430 1280,502 1270,504"], [OL, "1266,412 1271,420 1271,504 1266,505"],
  [YY, "1315,362 1457,342 1457,475 1315,498"], [TY, "1257,270 1266,270 1322,358 1457,337 1457,345 1315,364"],
  [MY, "1398,250 1457,340 1398,349"], [YY, "1470,338 1500,332 1500,388"],
  [MY, "1457,347 1500,413 1500,470 1457,476"],
  [TY, "1395,242 1412,238 1500,376 1500,412"],
  [PD, "1391,238 1408,234 1414,241 1396,245"], [PD, "1393,246 1397,246 1397,345 1393,345"], [PU, "1389,322 1397,320 1397,342 1389,343"],
  [MY, "1023,312 1160,525 1023,549"],
  [YY, "1182,540 1500,482 1500,642 1283,676 1283,638 1250,640"],
  [K, "1255,640 1283,637 1283,676 1270,672"],
  [TY, "1175,525 1500,470 1500,483 1185,540"],
  [MY, "1168,532 1260,684 1168,697"],
  [TY, "1023,309 1040,306 1276,684 1252,690"],
  [PD, "1158,527 1176,522 1182,530 1164,535"], [PD, "1162,535 1166,535 1166,696 1162,696"], [PU, "1158,588 1167,586 1167,600 1158,602"], [PU, "1158,614 1167,612 1167,630 1158,632"], [PU, "1158,655 1167,653 1167,674 1158,676"], [YY, "1155,674 1161,674 1161,693 1155,694"],
  [OL, "0,903 610,801 1500,655 1500,1028 0,1276"],
  [OT, "0,891 610,789 1500,641 1500,655 0,904"],
  [TY, "600,790 625,787 628,794 610,798"], [TY, "883,744 905,741 909,748 888,752"],
  [GR, "625,794 888,750 888,1050 690,1062 625,1090"], [OD, "622,790 885,744 888,752 625,797"],
  [YY, "608,798 627,795 627,866 608,868"], [YY, "606,900 610,900 610,1075 606,1075"],
  [YY, "888,755 907,752 907,1036 888,1048"],
  [YY, "1260,690 1280,686 1280,740 1260,745"],
  [BL, "888,813 1500,710 1500,752 888,856"],
  [OT, "0,968 107,950 107,1093 0,1113"], [K, "0,968 103,952 103,1088 0,1104"],
  [K, "173,940 310,915 310,1143 173,1165"],
  [K, "173,1165 310,1143 400,1130 400,1165 173,1202"],
  [OT, "378,902 546,873 546,1018 378,1052"], [K, "378,902 540,875 540,1015 378,1042"],
  [MY, "475,886 540,875 540,992"], [PD, "502,882 513,880 513,940 502,925"],
  [BL, "103,948 173,937 173,974 103,982"], [BL, "0,961 608,861 608,865 0,965"], [BL, "310,912 378,900 378,937 312,948"], [BL, "543,871 617,858 612,900 545,909"],
  [BL, "0,1178 170,1152 170,1175 0,1203"], [BD, "0,1176 168,1149 170,1160 0,1187"],
  [BL, "173,1200 403,1163 403,1175 173,1212"],
  [BL, "400,1112 615,1078 615,1100 402,1137"], [BD, "400,1110 612,1075 615,1086 402,1122"],
  [BL, "690,1062 870,1035 872,1057 690,1086"], [BD, "690,1060 868,1032 872,1042 690,1072"],
  [K, "873,1052 1100,1016 1100,1046 873,1084"],
  [BL, "873,1084 1105,1046 1105,1058 873,1098"], [BD, "873,1082 1105,1044 1105,1050 873,1088"],
  [BL, "1100,995 1297,964 1297,984 1102,1018"], [BD, "1100,993 1297,960 1297,971 1102,1005"],
  [BL, "0,1271 1500,1022 1500,1028 0,1278"],
  [OT, "952,848 1092,824 1092,925 952,953"], [K, "952,848 1087,826 1087,921 952,944"], [OL, "1062,828 1087,824 1087,850 1062,854"], [K, "1062,846 1087,842 1087,880 1062,880"],
  [YY, "952,848 1062,830 1062,850 952,867"],
  [K, "1148,818 1237,803 1237,972 1148,986"], [MY, "1160,815 1237,802 1237,948 1160,830"], [PU, "1158,810 1167,808 1167,834 1158,832"], [OT, "1237,803 1242,802 1242,970 1237,971"],
  [K, "1343,780 1387,772 1387,947 1343,954"], [YY, "1343,780 1385,773 1385,795 1343,803"], [OT, "1387,772 1392,771 1392,945 1387,946"],
  [OT, "1447,762 1500,753 1500,860 1447,869"], [K, "1447,762 1500,753 1500,852 1447,861"], [YY, "1447,762 1500,753 1500,775 1447,784"],
  [BL, "1343,954 1500,928 1500,948 1343,976"], [BD, "1343,951 1500,925 1500,936 1343,963"],
  [YY, "1260,795 1265,795 1265,810 1260,810"],
  [OL, "612,872 675,862 690,885 690,1180 625,1187"],
  [OD, "612,872 626,890 626,1187 615,1170"],
  [OT, "612,875 675,862 690,883 626,893"], [OL, "622,877 668,870 676,882 634,888"],
  [OL, "1290,760 1332,750 1343,778 1343,1070 1305,1077"],
  [OD, "1290,758 1306,780 1306,1077 1297,1062"],
  [OT, "1290,758 1332,750 1343,772 1306,780"], [OL, "1300,761 1326,756 1332,768 1312,772"],
];

const east: Shape[] = [
  [OL, "0,498 915,345 915,700 0,800"],
  [OL, "207,437 318,420 324,432 212,450"], [OT, "207,437 318,420 324,432 316,432 310,427 212,444"],
  [OL, "805,335 912,318 918,332 812,350"], [OT, "805,335 912,318 918,332 908,324 812,341"],
  [OD, "915,347 1155,722 988,745 915,600"],
  [OT, "0,485 912,338 1145,720 1168,720 920,330 912,318 906,322 915,336 0,485"],
  [OT, "0,485 915,335 915,349 0,500"],
  [OT, "910,325 920,328 1168,718 1148,724 914,346"],
  [K, "0,565 33,558 33,596 0,601"],
  [OT, "88,543 215,524 215,672 113,692"], [K, "88,545 208,527 208,665 113,682"],
  [OT, "370,497 538,470 538,615 405,643"], [K, "370,497 533,472 533,610 400,632 370,590"],
  [OT, "688,445 800,427 800,487 715,502"], [K, "688,445 795,430 795,486 715,499"],
  [MY, "45,495 104,587 45,595"], [TY, "45,492 55,491 114,580 102,588"],
  [YY, "0,603 113,586 113,720 50,735 0,655"], [TY, "0,599 110,580 114,587 0,606"],
  [MY, "270,460 408,672 270,693"],
  [YY, "0,748 34,742 34,906 0,911"],
  [YY, "60,745 410,683 410,805 308,820 308,860 143,887"],
  [MY, "308,820 403,803 403,842 330,855"], [K, "308,820 332,855 308,858"],
  [TY, "45,735 410,671 415,682 58,745"],
  [TY, "0,735 34,731 34,743 0,749"],
  [MY, "38,745 132,888 38,904"],
  [TY, "0,652 50,735 145,885 125,890 35,742 0,680"],
  [PD, "33,736 50,732 54,738 38,743"], [PD, "36,742 39,742 39,903 36,904"], [PU, "32,792 40,790 40,802 32,804"], [PU, "32,820 40,818 40,838 32,840"], [PU, "32,860 40,858 40,880 32,882"],
  [MY, "413,680 512,828 413,843"],
  [YY, "435,685 783,620 783,775 530,818 530,783 500,783"], [K, "500,784 530,782 530,820 520,822"],
  [TY, "425,668 780,610 787,620 438,685"],
  [TY, "270,455 288,451 525,825 503,832"],
  [PD, "407,673 424,669 429,676 412,679"], [PD, "409,679 412,679 412,842 409,842"], [PU, "405,732 413,730 413,738 405,740"], [PU, "405,756 413,754 413,775 405,777"], [PU, "405,797 413,795 413,816 405,818"], [YY, "402,806 406,806 406,838 402,838"],
  [MY, "645,398 780,610 660,630 645,632"],
  [YY, "647,525 655,540 655,628 647,630"], [PU, "655,538 665,550 665,627 655,629"], [PU, "636,465 644,463 644,486 636,488"], [PU, "636,507 644,505 644,528 636,530"], [PU, "636,545 644,543 644,568 636,570"], [PU, "636,586 644,584 644,608 636,610"], [PD, "642,395 646,395 646,631 642,632"],
  [TY, "712,500 715,505 715,617 712,618"], [TY, "718,510 721,514 721,617 718,618"],
  [MY, "783,620 872,762 783,777"],
  [YY, "733,510 988,465 988,740 893,757"],
  [TY, "715,502 983,457 990,465 735,512"],
  [TY, "642,392 655,390 892,760 868,766"],
  [PD, "637,382 656,377 661,388 656,394 645,390"],
  [BL, "893,753 988,738 988,742 893,758"],
  [OL, "1133,728 1168,720 1168,1010 1133,1010"],
  [OL, "0,918 885,772 885,1068 990,1050 1150,1020 1155,1100 0,1292"],
  [OT, "0,906 885,760 885,773 0,919"],
  [GR, "897,768 1133,728 1133,1010 990,1052 897,1068"], [OD, "892,758 1150,716 1152,722 897,770"],
  [OT, "1118,708 1130,702 1132,722 1118,724"],
  [BL, "0,978 880,832 880,872 0,1022"],
  [K, "0,1022 80,1010 80,1108 0,1122"], [MY, "38,1016 80,1009 80,1106 38,1040"], [YY, "0,1022 30,1017 30,1040 0,1045"], [PU, "32,1015 39,1014 39,1042 32,1040"],
  [OT, "80,1009 86,1008 86,1112 0,1131 0,1122 80,1107"],
  [OT, "199,990 339,967 339,1075 199,1098"], [K, "199,990 334,968 334,1067 199,1089"], [YY, "199,990 308,972 308,993 199,1012"], [OL, "308,970 334,966 334,985 308,990"],
  [K, "395,958 485,942 485,1112 395,1128"], [MY, "405,955 485,938 485,1090 405,965"], [YY, "400,955 405,955 405,976 400,976"], [PU, "405,955 413,953 413,978 405,977"], [OT, "485,940 491,939 491,1110 485,1111"],
  [YY, "508,835 516,832 516,890 508,892"], [TY, "507,826 523,823 523,830 510,835"],
  [K, "590,925 633,917 633,1092 590,1100"], [YY, "590,925 633,917 633,940 590,947"], [OT, "633,917 638,916 638,1090 633,1091"],
  [OT, "694,907 833,882 833,990 694,1015"], [K, "694,907 828,884 828,983 694,1006"], [YY, "694,907 783,892 783,913 694,929"], [MY, "783,892 828,884 828,983 783,915"],
  [K, "72,1204 300,1168 300,1197 72,1234"], [K, "762,1088 990,1050 990,1080 762,1118"],
  [BL, "72,1235 305,1198 305,1210 72,1251"], [BD, "72,1233 303,1195 305,1202 72,1240"],
  [BL, "762,1118 995,1081 995,1094 762,1134"], [BD, "762,1116 993,1078 995,1086 762,1123"],
  [BL, "0,1197 72,1187 72,1210 0,1221"], [BD, "0,1194 70,1184 72,1194 0,1206"],
  [BL, "300,1148 515,1113 515,1133 302,1169"], [BD, "300,1145 515,1109 515,1120 302,1156"],
  [BL, "590,1098 762,1070 762,1093 590,1122"], [BD, "590,1096 760,1067 762,1079 590,1108"],
  [BL, "990,1030 1150,1004 1150,1028 992,1054"], [BD, "990,1028 1150,1002 1150,1013 992,1040"],
  [BL, "0,1289 1155,1097 1155,1103 0,1297"],
  [PU, "880,765 898,762 898,1066 878,1070"], [PU, "875,905 882,905 882,925 875,925"], [PU, "875,945 882,945 882,967 875,967"], [PU, "875,985 882,985 882,1007 875,1007"], [PU, "875,1027 882,1027 882,1070 875,1070"],
  [OL, "510,905 575,895 590,915 590,1215 523,1223"],
  [OD, "510,905 524,925 524,1223 517,1210"],
  [OT, "510,905 575,895 590,915 524,926"], [OL, "520,907 569,900 578,913 532,920"], [OT, "526,909 567,903 570,911 550,916"],
  [OL, "1147,798 1212,788 1225,810 1225,1108 1158,1117"],
  [OD, "1147,798 1160,818 1160,1117 1152,1105"],
  [OT, "1147,798 1212,788 1225,808 1160,819"], [OL, "1157,800 1206,793 1214,807 1168,813"], [OT, "1162,802 1204,796 1206,804 1186,808"],
  [BL, "1206,1018 1224,1016 1224,1024 1206,1026"],
];

const Wing = ({ shapes: list, id, x, y, w }: { shapes: Shape[]; id: string; x: number; y: number; w: number }) => (
  <g transform={`translate(${x} ${y}) scale(0.33333)`}>
    <clipPath id={id}><rect x="-6" y="0" width={w + 6} height="1500" /></clipPath>
    <g clipPath={`url(#${id})`}>
      {list.map(([fill, points], i) => <polygon key={i} fill={fill} points={points} />)}
    </g>
  </g>
);

const bubbles: [string, number, number][] = [
  ["1", 510, 544], ["B", 510, 572], ["A", 510, 714], ["1", 658, 780], ["2", 907, 739], ["3", 1156, 697],
  ["4", 1374, 660], ["5", 1623, 618], ["6", 1841, 582], ["B", 1860, 345], ["A", 1907, 479],
];

const dims: [string, number, number, number][] = [
  ["8000", 754, 713, -9], ["8000", 1003, 672, -9], ["7000", 1236, 632, -9], ["38000", 1237, 659, -9],
  ["8000", 1469, 593, -9], ["7000", 1703, 553, -9], ["8000", 1865, 414, 58],
];

const Decagon = ({ x, y }: { x: number; y: number }) => (
  <path d={`M${x - 4} ${y - 11}h7l6 4 3 7-3 7-6 4h-7l-6-4-2-7 2-7z`} fill="none" stroke="#008000" />
);

const Scene = () => (
  <svg viewBox="498 166 1422 844" preserveAspectRatio="xMinYMin slice" className="block h-full w-full bg-black" aria-label="三维视图">
    <defs>
      <clipPath id="pane1"><rect x="840" y="430" width="41" height="70" /></clipPath>
      <clipPath id="pane2"><rect x="1040" y="390" width="59" height="40" /></clipPath>
      <clipPath id="pane3"><rect x="1540" y="330" width="38" height="50" /></clipPath>
    </defs>
    {/* tops of the far bubbles */}
    <g fill="none" stroke="#008000">
      <path d="M713 437v-3l10-2 8 4M962 395v-3l9-2 9 4M1180 358v-3l9-2 9 4M1429 317v-3l9-2 9 4M1647 279v-2l9-2 8 3" />
      <path d="M498 519l25-4M498 527l7 7M521 571l3-1M498 693l7 12M521 712l86-14M498 569l10 2" />
    </g>
    <Wing id="wing-w" shapes={west} x={500} y={250} w={1200} />
    <Wing id="wing-m" shapes={middle} x={900} y={250} w={1500} />
    <Wing id="wing-e" shapes={east} x={1400} y={160} w={1560} />
    <g transform="translate(500 250) scale(0.33333)">
      <path fill={PU} d="M1203 470h18v302l-18 3zM1198 555h29v20h-29zM1198 596h29v22h-29zM1198 636h29v22h-29zM1198 677h29v22h-29zM1198 718h29v20h-29zM1198 752h29v20l-29 4z" />
      <path fill={PD} d="M1198 470l18-3 5 8-18 3z" />
      <path fill={OL} d="M1143 978h4v10h-4z" />
      <path fill={K} d="M1143 982l160-27v135l-160 24z" />
      <path fill={OT} d="M1143 1114l160-24 4-140v145l-164 29z" />
      <path fill={BL} d="M1140 976l165-27v4l-165 28zM1126 978l12-2v24l-6-12z" />
      <path fill={BL} d="M1143 1190l230-38v22l-230 38zM1143 1284l100-17v6l-100 17z" />
      <path fill={BD} d="M1143 1187l225-38 5 10-230 38z" />
      <path fill={OL} d="M1090 992l42-8 10 24v297l-42 5z" />
      <path fill={OD} d="M1090 992l14 22v296l-6-10z" />
      <path fill={OT} d="M1090 992l42-8 10 24-38 6z" />
      <g fill="none" stroke="#008000" strokeWidth="3">
        <path d="M195 776l79-14M695 693l64-11M697 628l63 100M922 653l220-37M1258 596l220-37M1442 500l36 57M1660 529l137-22M2070 460l60-10M2098 392l34 56M2316 418l106-17" />
        <path d="M322 1345l136 214M410 1488l3555-598M402 1486l20 6M1125 1310l80 125M1878 1187l72 120M2525 1073l78 127" />
        <path d="M2814 335l94-16M2844 268l62 98M3072 292l162-27M3793 330l252-40M3908 312l240 386M3925 736l265-43M3925 838l80 122M3272 950l78 123M3890 308l36 8M4130 700l40-6" />
      </g>
      <g fill="none" stroke="#a00000" strokeWidth="2">
        <path d="M290 1433l85-12M443 1408l655-108M1143 1296l157-26M3925 820l155-24" />
        <path d="M75 958l247 387M1373 1165l137-23M1578 718l22 34" stroke="#e01010" strokeWidth="3" />
      </g>
    </g>
    <g fill="#fff" className="font-['Noto_Sans_CJK_SC',sans-serif] text-[18px]" textAnchor="middle">
      <g clipPath="url(#pane1)"><text x="876" y="476" transform="rotate(-9 876 470)">8000</text></g>
      <g clipPath="url(#pane2)"><text x="1080" y="413" transform="rotate(-9 1080 407)">38000</text></g>
      <g clipPath="url(#pane3)"><text x="1577" y="358" transform="rotate(-9 1577 352)">7000</text></g>
      {dims.map(([t, x, y, r], i) => <text key={i} x={x} y={y + 6} transform={`rotate(${r} ${x} ${y})`}>{t}</text>)}
      {bubbles.map(([t, x, y], i) => (
        <g key={i}>
          <Decagon x={x} y={y} />
          <text x={x} y={y + 6}>{t}</text>
        </g>
      ))}
    </g>
    {/* mark-up */}
    <polyline
      transform="translate(500 250) scale(0.33333)"
      points="1715,832 1765,832 1785,842 1820,868 1830,872 1856,886 1838,898 1800,912 1775,928 1725,934 1705,942 1640,945 1580,958 1500,970 1485,977 1340,979 1310,980 1250,1003 1220,1015 1180,1018 1160,1028 1140,1030 1085,1047 1010,1050 960,1072 930,1080 850,1096 700,1098 600,1102 570,1115 550,1125 520,1132 460,1138 430,1146 395,1158 375,1162 325,1158 300,1145 293,1138 291,1108 300,1095 330,1080 370,1072 450,1057 530,1047 600,1040 650,1032 690,1018 720,1008 760,990 800,982 970,975 980,969 1030,960 1070,945 1110,933 1150,918 1210,918 1245,924 1270,935 1310,952 1345,953 1390,940 1430,925 1490,896 1500,882 1550,856 1565,850 1785,850"
      fill="none" stroke="#ff1c0d" strokeWidth="8" strokeLinejoin="round" strokeLinecap="round"
    />
    <text x="741" y="667" fill="#f3200f" className="font-['Noto_Sans_CJK_SC',sans-serif] text-[28px]">梁下吊500，不连续这些地方可以这样布置的吗？</text>
    {/* axes */}
    <g>
      <path d="M548 960l14-3" stroke="#f00" strokeWidth="4" /><path d="M562 950l14 6-12 7z" fill="#f00" />
      <path d="M548 957v-14" stroke="#00f" strokeWidth="4" /><path d="M542 946l6-12 6 12z" fill="#00f" />
      <circle cx="541" cy="951" r="5" fill="#0d0" />
      <path d="M544 956l8 1v8l-8-2z" fill="#bbb" />
      <g className="font-['Liberation_Sans',sans-serif] text-[16px]" textAnchor="middle">
        <text x="548" y="935" fill="#00f">Z</text>
        <text x="537" y="948" fill="#0f0">Y</text>
        <text x="582" y="960" fill="#f00">X</text>
      </g>
    </g>
  </svg>
);

const D = "#2e3f52";

const ViewTools = () => (
  <div className="absolute right-0 top-0 flex h-[227px] w-[33px] flex-col items-center rounded-b-[2px] border border-[#b4b6b9] bg-[#96989c] pt-[9px]">
    {[
      <><circle cx="12" cy="13" r="9" fill="#bccbdc" stroke={D} /><circle cx="10" cy="9" r="4" fill="#e9eff5" /><path d="M2 19l8-3 12-10" stroke={D} fill="none" /><circle cx="20" cy="8" r="4" fill="#dbe5ef" stroke={D} /><circle cx="2" cy="18" r="1.500" fill="none" stroke={D} /></>,
      <><path d="M.500.500h23v22h-23z" fill="#8297b1" stroke={D} /><path d="M13 14.500h3v2.500h-3v2.500h3M18 14.500v5h2l1-1v-3l-1-1z" fill="none" stroke={D} /></>,
      <><path d="M.500 5.500l4-4h19v17l-4 4h-19z" fill="#d5e7fa" stroke={D} /><path d="M.500 5.500l4-4h19l-4 4z" fill="#8297b1" stroke={D} /><path d="M19.500 5.500v17M5.500 6v11.500h18M5.500 17.500l-5 5" fill="none" stroke={D} /></>,
      null,
      <><path d="M.500 5.500l4-4h19v17l-4 4h-19z" fill="#8297b1" stroke={D} /><path d="M.500 5.500h19l4-4M19.500 5.500v17" fill="none" stroke={D} /></>,
      null,
      <path d="M21 17a10 10 0 1 1-1-11M20 1v6h-6" fill="none" stroke={D} strokeWidth="1.500" />,
      null,
      <><path d="M.500 4.500l2-3h19l2 3v18h-23z" fill="#8297b1" stroke={D} /><path d="M0 4.500h24M12 8v12" stroke={D} /><path d="M3 8h3M3 12h3M3 15h3M3 19h3M15 8h3M15 12h3M15 15h3M15 19h3" stroke={D} strokeWidth="2" /><path d="M7 12h3M7 15h3M7 19h3M19 12h3M19 15h3M19 19h3" stroke={D} /></>,
    ].map((s, i) =>
      s ? (
        <React.Fragment key={i}>
          {i === 8 && <span className="mt-[5px] h-px w-6 shrink-0 bg-[#6c6e72]" />}
          <button aria-label={`视图工具${i + 1}`} className="mt-[5px] first:mt-0">
            <svg width="24" height="24" viewBox="0 0 24 24" className="block">{s}</svg>
          </button>
        </React.Fragment>
      ) : (
        <span key={i} className="flex h-[10px] items-end"><Caret /></span>
      ),
    )}
  </div>
);

/* ---------- status + taskbar ---------- */

const sbtn = "flex h-[25px] items-center justify-center gap-1 border border-[#9a9a9c] bg-[#cfcfd2] text-[#333]";

const StatusBar = () => (
  <footer className="flex h-[30px] shrink-0 items-center bg-[#dddde0] text-[12px] leading-5 text-[#333]">
    <span className="w-[265px] whitespace-pre pl-[2px]">X  =  36339 Y  =  -4395 Z  =  3950</span>
    <span className="w-[83px] whitespace-pre">层高：  3.55</span>
    <span className="w-[133px] whitespace-pre">标高：  3.95~7.5</span>
    <span className="w-[103px]">0</span>
    <span className="w-[103px]">隐藏：0</span>
    <div className="flex items-center gap-[3px]">
      <button aria-label="正交" className={`${sbtn} w-[25px]`}><svg width="14" height="14" viewBox="0 0 14 14" fill="none" stroke="#333"><path d="M1.500 1v11.500h12M1.500 8.500h4v4" /></svg></button>
      <button aria-label="矩形" className="flex h-[25px] w-9 items-center justify-center gap-[7px] border border-[#2f92ea] bg-white"><svg width="17" height="17" viewBox="0 0 17 17"><path d="M2.500 2.500h12v13h-12z" fill="#fff" stroke={B} strokeWidth="1.500" /><path d="M0 0h5v5h-5z" fill="#f6a26b" stroke="#e8702a" /></svg><Caret /></button>
      <button aria-label="交点" className={`${sbtn} ml-[3px] w-[25px]`}><svg width="16" height="16" viewBox="0 0 16 16" stroke="#888"><path d="M1 1l14 14M15 1l-14 14" /></svg></button>
      <button aria-label="角度" className={`${sbtn} ml-[3px] w-9`}><svg width="17" height="14" viewBox="0 0 17 14" fill="none" stroke="#333"><path d="M13 1l-12 11.500h15" strokeWidth="1.500" /><circle cx="7" cy="6.500" r="1" fill="#333" /></svg><Caret /></button>
      <button aria-label="偏移" className={`${sbtn} w-9`}><svg width="17" height="14" viewBox="0 0 17 14" stroke="#333"><path d="M0 4h7M3.500 1v6" strokeWidth="1.500" /><path d="M7.500 8.500h9v4h-9z" fill="#333" /></svg><Caret /></button>
      <button className={`${sbtn} w-[73px]`}>跨图层选择</button>
      <button className={`${sbtn} w-[61px]`}>折线选择</button>
    </div>
    <span className="ml-[6px]">按鼠标左键指定第一个角点，或拾取构件图元</span>
    <span className="ml-auto pr-9">500 FPS</span>
  </footer>
);

const Browser = ({ color, ring }: { color: string; ring: string }) => (
  <svg width="24" height="24" viewBox="0 0 24 24" fill="none" aria-hidden="true">
    <path d="M6 13h14c1-10-14-11-14 0 0 8 10 8 13 3" stroke={color} strokeWidth="4" />
    <path d="M3 21c-5 0 3-15 12-19 5-2 7 0 5 4" stroke={ring} strokeWidth="2" />
  </svg>
);

const WeChat = ({ size }: { size: number }) => (
  <svg width={size} height={size} viewBox="0 0 24 24" aria-hidden="true">
    <path d="M9 2c-10 0-11 10-5 13l-1 4 4-3c12 2 13-14 2-14z" fill="#18c964" />
    <path d="M17 11c-8 0-8 9 0 9l3 2v-3c5-3 2-8-3-8z" fill="#e4e4e4" />
    <path d="M6 7v2M12 7v2M15 14v1M19 14v1" stroke="#555" strokeWidth="1.500" />
  </svg>
);

const tasks: { t: string; icon: React.ReactNode; cls: string }[] = [
  { t: "自定义线布置钢筋...", icon: <Browser color="#4fb51f" ring="#a6dc7d" />, cls: "w-[152px] pl-[6px]" },
  { t: "广联达BIM土建计...", icon: <Logo size={24} />, cls: "ml-[5px] w-[160px] bg-[#f8f8f8] pl-[10px]" },
  {
    t: "CAD快速看图 - E:\\...",
    icon: <svg width="24" height="24" viewBox="0 0 24 24"><rect x="1" y="1" width="22" height="22" rx="3" fill="#1873c9" stroke="#5d6a77" strokeWidth="2" /><path d="M7 8h-3v8h3M9 16l2.500-9 2.500 9M10 13h3M16 8v8h2l2-2v-4l-2-2z" fill="none" stroke="#dff" strokeWidth="1.500" /></svg>,
    cls: "ml-[5px] w-[152px] pl-[6px]",
  },
  {
    t: "大队营房有问题的...",
    icon: <svg width="24" height="24" viewBox="0 0 24 24"><path d="M11 1l10 5v12l-10 5-10-5v-12z" fill="#2b74ea" /><path d="M5 8l3 8 3-6 3 6 3-8" fill="none" stroke="#fff" strokeWidth="1.500" /><rect x="13" y="14" width="11" height="10" rx="1" fill="#5b97f5" /><path d="M15 17l2 5 1.500-4 1.500 4 2-5" fill="none" stroke="#fff" /></svg>,
    cls: "ml-[9px] w-[152px] pl-[6px]",
  },
  { t: "微信", icon: <WeChat size={24} />, cls: "ml-[9px] w-[152px] pl-[6px]" },
];

const Taskbar = () => (
  <footer className="flex h-10 shrink-0 border-t border-[#d4e6d4] bg-[#eee] text-[12px] text-black">
    <button aria-label="开始" className="flex w-12 items-center justify-center"><svg width="16" height="16" viewBox="0 0 16 16"><path d="M0 2l7-1v7h-7zM8 1l8-1v8h-8zM0 9h7v6l-7-1zM8 9h8v7l-8-1z" /></svg></button>
    <button aria-label="Cortana" className="flex w-12 items-center justify-center"><svg width="16" height="16" viewBox="0 0 16 16"><circle cx="8" cy="8" r="6.500" fill="none" stroke="#000" strokeWidth="2" /></svg></button>
    <button aria-label="任务视图" className="flex w-12 items-center justify-center"><svg width="18" height="16" viewBox="0 0 18 16" fill="none" stroke="#000"><path d="M1.500 0v2.500h10v-2.500M1.500 5.500h10v6h-10zM1.500 16v-2h10v2M15.500 0v3M15.500 8v8" /><path d="M15 4h2v3h-2z" fill="#000" /></svg></button>
    <button aria-label="IE" className="flex w-[56px] items-center justify-center"><Browser color="#37a5e6" ring="#f4c430" /></button>
    {tasks.map((k) => (
      <button key={k.t} className={`flex items-center gap-1 whitespace-nowrap border-b-2 border-[#0078d7] ${k.cls}`}>{k.icon}{k.t}</button>
    ))}
    <div className="ml-auto flex items-center">
      <div className="flex items-center gap-2">
        <svg width="16" height="18" viewBox="0 0 16 18" fill="none" stroke="#000"><path d="M7.500 1l6 2v6c0 4-4 6-6 7-2-1-6-3-6-7v-6zM7.500 1v15M2 8h12" fill="#fff" /><circle cx="12" cy="13" r="4" fill="#1b8a4a" stroke="none" /><path d="M10 13l1.500 1.500 2.500-3" stroke="#fff" /></svg>
        <svg width="16" height="16" viewBox="0 0 24 24"><circle cx="12" cy="12" r="12" fill="#7bc73c" /><path d="M18 13h-11c0 5 6 5 8 2h3c-3 7-14 6-14-3s14-10 14 1zM7 10.500h8c0-4-7-4-8 0z" fill="#fff" /></svg>
        <svg width="16" height="16" viewBox="0 0 16 16"><circle cx="8" cy="8" r="8" fill="#2d9b37" /><circle cx="8" cy="8" r="6.500" fill="#f6d21a" /><path d="M4 8h8M8 4v8" stroke="#1f7a2a" strokeWidth="2" /></svg>
        <WeChat size={16} />
        <svg width="16" height="16" viewBox="0 0 16 16"><circle cx="8" cy="8" r="8" fill="#2196f3" /><path d="M14 2c-4 0-9 1-9 6 0 4 6 4 6 1h-3" fill="none" stroke="#fff" strokeWidth="2" /></svg>
        <svg width="16" height="16" viewBox="0 0 16 16"><path d="M1 1l7 1 7-1c0 8-2 12-7 15-5-3-7-7-7-15z" fill="#1d68b8" stroke="#9cb3c8" /><path d="M11 4l-5 2 4 3-5 3" fill="none" stroke="#fff" strokeWidth="1.500" /></svg>
        <svg width="16" height="16" viewBox="0 0 16 16" fill="none" stroke="#000"><path d="M4 3.500h11.500v8h-10M9.500 12v3M6 15.500h7M.500 1.500h4v4h-4zM2.500 6v8" /></svg>
        <svg width="16" height="16" viewBox="0 0 16 16" fill="none" stroke="#000"><path d="M.500 5.500h2.500l4-3.500v12l-4-3.500h-2.500zM9 6c1 1 1 3 0 4" /><path d="M11 4c2 2 2 6 0 8M13 2c3 3 3 9 0 12" stroke="#888" /></svg>
      </div>
      <span className="ml-[6px] text-[16px] leading-5">英</span>
      <span className="ml-[14px] flex h-4 w-4 items-center justify-center border border-black text-[12px] leading-none">拼</span>
      <div className="ml-4 w-[62px] text-center leading-[17px]">
        <div>9:17 周六</div>
        <div>2021/2/20</div>
      </div>
      <svg width="16" height="17" viewBox="0 0 16 17" className="ml-[17px] mr-[20px]" fill="none" stroke="#000"><path d="M.500.500h15v12h-5l-2.500 3-2.500-3h-5z" /></svg>
      <span className="h-10 w-[5px] border-l border-[#bbb]" />
    </div>
  </footer>
);

const App = () => (
  <div className={`flex h-screen w-full flex-col overflow-hidden bg-white ${FONT}`}>
    <Header />
    <Ribbon />
    <SelectBar />
    <main className="flex min-h-0 flex-1">
      <NavPanel />
      <div className="ml-1 flex w-[280px] shrink-0 flex-col">
        <ComponentPanel />
        <PropertyPanel />
      </div>
      <div className="flex w-1 shrink-0 flex-col pt-[373px]">
        <span className="h-[100px] bg-[#59616c]" />
      </div>
      <div className="relative min-w-0 flex-1 overflow-hidden">
        <Scene />
        <ViewTools />
      </div>
    </main>
    <StatusBar />
    <Taskbar />
  </div>
);

export default App;
